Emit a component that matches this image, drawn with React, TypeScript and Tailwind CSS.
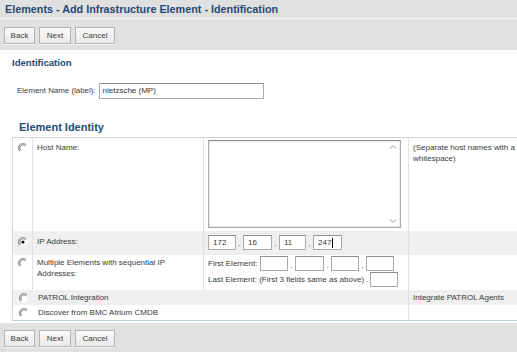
import React from "react";

const Radio = ({ checked = false }: { checked?: boolean }) => (
  <svg width="10" height="10" viewBox="0 0 10 10" className="block">
    <circle cx="5" cy="5" r="4.2" fill="#ffffff" />
    <path d="M1.8 8.2 A4.5 4.5 0 0 1 8.2 1.8" fill="none" stroke="#9a9a9a" strokeWidth="1.1" />
    <path d="M2.6 7.4 A3.4 3.4 0 0 1 7.4 2.6" fill="none" stroke="#5a5a5a" strokeWidth="0.8" />
    {checked && <circle cx="5" cy="5" r="1.6" fill="#111111" />}
  </svg>
);

const Btn = ({ label, w }: { label: string; w: string }) => (
  <div
    className={`${w} h-[17px] flex items-center justify-center border border-[#b3b3b3] bg-gradient-to-b from-[#fbfbfb] to-[#e9e9e9] text-[8px] text-[#3a3a3a] shadow-[0_1px_0_#f8f8f8]`}
  >
    {label}
  </div>
);

const Box = ({ w, value, cursor }: { w: string; value?: string; cursor?: boolean }) => (
  <div
    className={`${w} h-[15px] border border-[#a9a9a9] border-t-[#8f8f8f] bg-white flex items-center pl-[4px] text-[8px] text-[#333]`}
  >
    {value}
    {cursor && <span className="ml-[1px] inline-block w-[1px] h-[10px] bg-black" />}
  </div>
);

const Dot = () => <span className="w-[7px] text-center text-[8px] text-[#333] leading-none pt-[5px]">.</span>;

export default function App() {
  return (
    <div
      className="w-[517px] h-[352px] overflow-hidden bg-white flex flex-col text-[#3a3a3a]"
      style={{ fontFamily: '"Liberation Sans", Arial, sans-serif' }}
    >
      {/* Header */}
      <div className="h-[18px] bg-[#dfe0df] flex items-center pl-[5px] border-b border-[#f4f5f4] box-content">
        <span className="text-[10.8px] font-bold text-[#1f4a73] leading-none">
          Elements - Add Infrastructure Element - Identification
        </span>
      </div>
      {/* Toolbar */}
      <div className="h-[31px] bg-[#e0e1e0] flex items-start pt-[8px] pl-[4px] gap-[4px]">
        <Btn label="Back" w="w-[31px]" />
        <Btn label="Next" w="w-[32px]" />
        <Btn label="Cancel" w="w-[40px]" />
      </div>

      {/* Content */}
      <div className="flex-1 flex flex-col">
        <div className="mt-[7px] pl-[12px] h-[12px] flex items-center">
          <span className="text-[9.6px] font-bold text-[#1f4a73] leading-none">Identification</span>
        </div>
        <div className="mt-[14px] pl-[17px] flex items-center gap-[3px] h-[16px]">
          <span className="text-[7.9px] text-[#3a3a3a]">Element Name (label):</span>
          <div className="w-[165px] h-[16px] border border-[#a9a9a9] border-t-[#8f8f8f] bg-white flex items-center pl-[3px] text-[8px] text-[#333]">
            nietzsche (MP)
          </div>
        </div>
        <div className="mt-[22px] pl-[19px] h-[13px] flex items-center">
          <span className="text-[11px] font-bold text-[#234d76] leading-none">Element Identity</span>
        </div>

        {/* Table */}
        <div className="mt-[3px] ml-[12px] border-t border-t-[#c9d6dc] border-l border-l-[#dcdcdc] border-b border-b-[#b9d3dd] text-[8px] text-[#3a3a3a]">
          {/* Host Name */}
          <div className="flex h-[93px]">
            <div className="w-[20px] border-r border-[#e1e1e1] flex justify-center pt-[5px] pl-[1px]">
              <Radio />
            </div>
            <div className="w-[171px] border-r border-[#e1e1e1] pl-[4px] pt-[4px] leading-[11px]">Host Name:</div>
            <div className="w-[205px] border-r border-[#e1e1e1] pl-[4px] pt-[2px]">
              <div className="w-[193px] h-[88px] border border-[#a9a9a9] border-t-[#8c8c8c] bg-white relative">
                <div className="absolute inset-0 border border-[#ececec]" />
                <svg width="8" height="6" viewBox="0 0 8 6" className="absolute right-[3px] top-[3px]">
                  <path d="M1 4.5 L4 1.5 L7 4.5" fill="none" stroke="#c4c4c4" strokeWidth="1.2" />
                </svg>
                <svg width="8" height="6" viewBox="0 0 8 6" className="absolute right-[3px] bottom-[3px]">
                  <path d="M1 1.5 L4 4.5 L7 1.5" fill="none" stroke="#c4c4c4" strokeWidth="1.2" />
                </svg>
              </div>
            </div>
            <div className="flex-1 pl-[4px] pt-[4px] leading-[11px]">
              (Separate host names with a
              <br />
              whitespace)
            </div>
          </div>

          {/* IP Address */}
          <div className="flex h-[24px] bg-[#eeefee]">
            <div className="w-[20px] border-r border-[#e1e1e1] flex justify-center pt-[6px] pl-[1px]">
              <Radio checked />
            </div>
            <div className="w-[171px] border-r border-[#e1e1e1] pl-[4px] pt-[5px] leading-[11px]">IP Address:</div>
            <div className="w-[205px] border-r border-[#e1e1e1] pl-[4px] pt-[4px] flex items-start">
              <Box w="w-[28px]" value="172" />
              <Dot />
              <Box w="w-[29px]" value="16" />
              <Dot />
              <Box w="w-[27px]" value="11" />
              <Dot />
              <Box w="w-[29px]" value="247" cursor />
            </div>
            <div className="flex-1" />
          </div>

          {/* Multiple */}
          <div className="flex h-[35px]">
            <div className="w-[20px] border-r border-[#e1e1e1] flex justify-center pt-[3px] pl-[1px]">
              <Radio />
            </div>
            <div className="w-[171px] border-r border-[#e1e1e1] pl-[4px] pt-[2px] leading-[11px]">
              Multiple Elements with sequential IP
              <br />
              Addresses:
            </div>
            <div className="w-[205px] border-r border-[#e1e1e1] pl-[4px] pt-[1px] flex flex-col gap-[1px]">
              <div className="flex items-center">
                <span className="w-[52px]">First Element:</span>
                <Box w="w-[28px]" />
                <Dot />
                <Box w="w-[29px]" />
                <Dot />
                <Box w="w-[28px]" />
                <Dot />
                <Box w="w-[28px]" />
              </div>
              <div className="flex items-center">
                <span>Last Element: (First 3 fields same as above)</span>
                <span className="w-[6px] text-center">.</span>
                <Box w="w-[28px]" />
              </div>
            </div>
            <div className="flex-1" />
          </div>

          {/* PATROL */}
          <div className="flex h-[15px] bg-[#eeefee]">
            <div className="w-[20px] flex justify-center items-center pl-[1px]">
              <Radio />
            </div>
            <div className="w-[376px] border-r border-[#e1e1e1] pl-[5px] flex items-center">PATROL Integration</div>
            <div className="flex-1 pl-[4px] flex items-center">Integrate PATROL Agents</div>
          </div>

          {/* Discover */}
          <div className="flex h-[15px]">
            <div className="w-[20px] flex justify-center items-center pl-[1px]">
              <Radio />
            </div>
            <div className="w-[376px] border-r border-[#e1e1e1] pl-[5px] flex items-center">Discover from BMC Atrium CMDB</div>
            <div className="flex-1" />
          </div>
        </div>

        <div className="h-[2px]" />
        {/* Bottom toolbar */}
        <div className="flex-1 bg-[#e0e1e0] flex items-start pt-[7px] pl-[4px] gap-[4px]">
          <Btn label="Back" w="w-[31px]" />
          <Btn label="Next" w="w-[32px]" />
          <Btn label="Cancel" w="w-[40px]" />
        </div>
      </div>
    </div>
  );
}
